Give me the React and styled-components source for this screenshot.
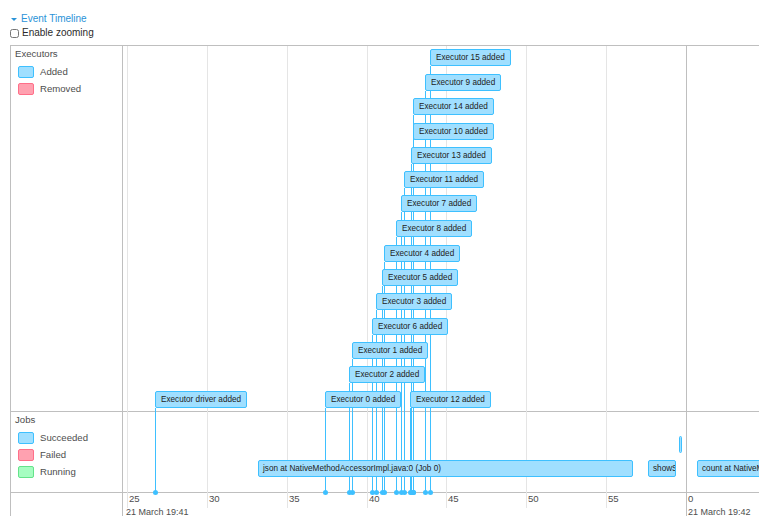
import React from "react";
import styled, { createGlobalStyle } from "styled-components";

const GlobalStyle = createGlobalStyle`
  html, body {
    margin: 0;
    padding: 0;
    background: #fff;
    overflow: hidden;
  }
  body {
    font-family: "Liberation Sans", Arial, Helvetica, sans-serif;
    color: #333;
  }
`;

const ORIGIN_X = 124;
const ORIGIN_Y = 46;
const AXIS_Y = 492;

const EXECUTORS = [
  { label: "Executor 15 added", x: 430, y: 49 },
  { label: "Executor 9 added", x: 425, y: 74 },
  { label: "Executor 14 added", x: 413, y: 98 },
  { label: "Executor 10 added", x: 413, y: 123 },
  { label: "Executor 13 added", x: 411, y: 147 },
  { label: "Executor 11 added", x: 404, y: 171 },
  { label: "Executor 7 added", x: 401, y: 195 },
  { label: "Executor 8 added", x: 396, y: 220 },
  { label: "Executor 4 added", x: 384, y: 245 },
  { label: "Executor 5 added", x: 382, y: 269 },
  { label: "Executor 3 added", x: 376, y: 293 },
  { label: "Executor 6 added", x: 372, y: 318 },
  { label: "Executor 1 added", x: 352, y: 342 },
  { label: "Executor 2 added", x: 349, y: 366 },
  { label: "Executor 0 added", x: 325, y: 391 },
  { label: "Executor 12 added", x: 410, y: 391 },
  { label: "Executor driver added", x: 155, y: 391 },
];

const JOBS = [
  { label: "json at NativeMethodAccessorImpl.java:0 (Job 0)", x: 258, y: 460, w: 375 },
  { label: "showString at NativeMethodAccessorImpl.java:0 (Job 1)", x: 648, y: 460, w: 28 },
  { label: "", x: 679, y: 436, w: 3 },
  { label: "count at NativeMethodAccessorImpl.java:0 (Job 2)", x: 697, y: 460, w: 240 },
];

const MINOR_TICKS = [
  { label: "25", x: 127 },
  { label: "30", x: 207 },
  { label: "35", x: 287 },
  { label: "40", x: 367 },
  { label: "45", x: 446 },
  { label: "50", x: 526 },
  { label: "55", x: 606 },
];

const MAJOR_TICKS = [
  { minor: "0", major: "21 March 19:42", x: 686 },
];

const Page = styled.div`
  padding: 12px 0 0 10px;
`;

const Toggle = styled.a`
  display: flex;
  align-items: center;
  gap: 4px;
  height: 14px;
  font-size: 10px;
  line-height: 14px;
  color: #2a93d8;
  cursor: pointer;
  padding-left: 1px;
`;

const Caret = styled.span`
  width: 0;
  height: 0;
  border-left: 3px solid transparent;
  border-right: 3px solid transparent;
  border-top: 3px solid #2a93d8;
  margin-top: 1px;
`;

const ZoomRow = styled.label`
  display: flex;
  align-items: center;
  gap: 3px;
  margin-top: 1px;
  height: 12px;
  font-size: 10px;
  line-height: 12px;
  color: #2b2b2b;
`;

const Check = styled.input`
  width: 9px;
  height: 9px;
  margin: 0;
`;

const Timeline = styled.div`
  position: relative;
  margin-top: 6px;
  width: 1000px;
  border-top: 1px solid #bfbfbf;
  border-left: 1px solid #bfbfbf;
`;

const GroupRow = styled.div`
  display: grid;
  grid-template-columns: 112px 1fr;
  height: ${(p) => p.$h}px;
  border-bottom: ${(p) => (p.$last ? "none" : "1px solid #bfbfbf")};
`;

const LegendCell = styled.div`
  border-right: 1px solid #bfbfbf;
  padding: 2px 0 0 4px;
  font-size: 9.6px;
  color: #4d4d4d;
`;

const GroupTitle = styled.div`
  line-height: 12px;
  height: 12px;
`;

const LegendList = styled.div`
  display: flex;
  flex-direction: column;
  gap: 5px;
  margin-top: 6px;
  padding-left: 3px;
`;

const LegendItem = styled.div`
  display: flex;
  align-items: center;
  gap: 6px;
  height: 12px;
  line-height: 12px;
`;

const SWATCH = {
  blue: ["#a0dfff", "#3ec0ff"],
  red: ["#ffa1b0", "#ff6f89"],
  green: ["#a6fdc1", "#64e38a"],
};

const Swatch = styled.span`
  display: inline-block;
  box-sizing: border-box;
  width: 16px;
  height: 12px;
  border-radius: 2px;
  background: ${(p) => SWATCH[p.$tone][0]};
  border: 1px solid ${(p) => SWATCH[p.$tone][1]};
`;

const Track = styled.div``;

const Canvas = styled.div`
  position: absolute;
  left: 113px;
  top: 0;
  right: 0;
  bottom: 0;
  overflow: hidden;
  pointer-events: none;
`;

const GridLine = styled.div`
  position: absolute;
  top: 0;
  width: 1px;
  height: ${(p) => (p.$major ? "100%" : "462px")};
  background: ${(p) => (p.$major ? "#bfbfbf" : "#e5e5e5")};
`;

const TickLabel = styled.div`
  position: absolute;
  white-space: nowrap;
  font-size: ${(p) => (p.$major ? "9px" : "9.6px")};
  line-height: 12px;
  color: #4d4d4d;
`;

const ItemBox = styled.div`
  position: absolute;
  box-sizing: border-box;
  height: 17px;
  padding: 0 5px;
  font-size: 8.2px;
  line-height: 15px;
  white-space: nowrap;
  color: #222;
  background: #a0dfff;
  border: 1px solid #3ec0ff;
  border-radius: 2px;
  z-index: 2;
`;

const ItemLine = styled.div`
  position: absolute;
  width: 1px;
  background: #3ec0ff;
  z-index: 1;
`;

const ItemDot = styled.div`
  position: absolute;
  width: 5px;
  height: 5px;
  border-radius: 50%;
  background: #3ec0ff;
  z-index: 1;
`;

const RangeItem = styled.div`
  position: absolute;
  box-sizing: border-box;
  height: 17px;
  padding: 0 0 0 ${(p) => (p.$thin ? 0 : 4)}px;
  overflow: hidden;
  font-size: 8.2px;
  line-height: 15px;
  white-space: nowrap;
  color: #222;
  background: #a0dfff;
  border: 1px solid #3ec0ff;
  border-radius: 2px;
  z-index: 2;
`;

function Legend({ title, items }) {
  return (
    <LegendCell>
      <GroupTitle>{title}</GroupTitle>
      <LegendList>
        {items.map(([tone, label]) => (
          <LegendItem key={label}>
            <Swatch $tone={tone} />
            <span>{label}</span>
          </LegendItem>
        ))}
      </LegendList>
    </LegendCell>
  );
}

export default function App() {
  return (
    <>
      <GlobalStyle />
      <Page>
        <Toggle>
          <Caret />
          <span>Event Timeline</span>
        </Toggle>
        <ZoomRow>
          <Check type="checkbox" />
          <span>Enable zooming</span>
        </ZoomRow>
        <Timeline>
          <GroupRow $h={365}>
            <Legend
              title="Executors"
              items={[
                ["blue", "Added"],
                ["red", "Removed"],
              ]}
            />
            <Track />
          </GroupRow>
          <GroupRow $h={80}>
            <Legend
              title="Jobs"
              items={[
                ["blue", "Succeeded"],
                ["red", "Failed"],
                ["green", "Running"],
              ]}
            />
            <Track />
          </GroupRow>
          <GroupRow $h={40} $last>
            <LegendCell />
            <Track />
          </GroupRow>

          <Canvas>
            {MINOR_TICKS.map((t) => (
              <React.Fragment key={t.label}>
                <GridLine style={{ left: t.x - ORIGIN_X }} />
                <TickLabel style={{ left: t.x - ORIGIN_X + 2, top: AXIS_Y - ORIGIN_Y + 1 }}>
                  {t.label}
                </TickLabel>
              </React.Fragment>
            ))}
            <TickLabel $major style={{ left: 2, top: 506 - ORIGIN_Y }}>
              21 March 19:41
            </TickLabel>
            {MAJOR_TICKS.map((t) => (
              <React.Fragment key={t.major}>
                <GridLine $major style={{ left: t.x - ORIGIN_X }} />
                <TickLabel style={{ left: t.x - ORIGIN_X + 2, top: AXIS_Y - ORIGIN_Y + 1 }}>
                  {t.minor}
                </TickLabel>
                <TickLabel $major style={{ left: t.x - ORIGIN_X + 2, top: 506 - ORIGIN_Y }}>
                  {t.major}
                </TickLabel>
              </React.Fragment>
            ))}

            {EXECUTORS.map((e) => {
              const left = e.x - ORIGIN_X;
              const top = e.y - ORIGIN_Y;
              return (
                <React.Fragment key={e.label}>
                  <ItemLine
                    style={{ left, top: top + 17, height: AXIS_Y - e.y - 17 }}
                  />
                  <ItemDot style={{ left: left - 2, top: AXIS_Y - ORIGIN_Y - 2 }} />
                  <ItemBox style={{ left, top }}>{e.label}</ItemBox>
                </React.Fragment>
              );
            })}

            {JOBS.map((j, i) => (
              <RangeItem
                key={i}
                $thin={j.w < 8}
                style={{
                  left: j.x - ORIGIN_X,
                  top: j.y - ORIGIN_Y,
                  width: j.w,
                }}
              >
                {j.label}
              </RangeItem>
            ))}
          </Canvas>
        </Timeline>
      </Page>
    </>
  );
}
